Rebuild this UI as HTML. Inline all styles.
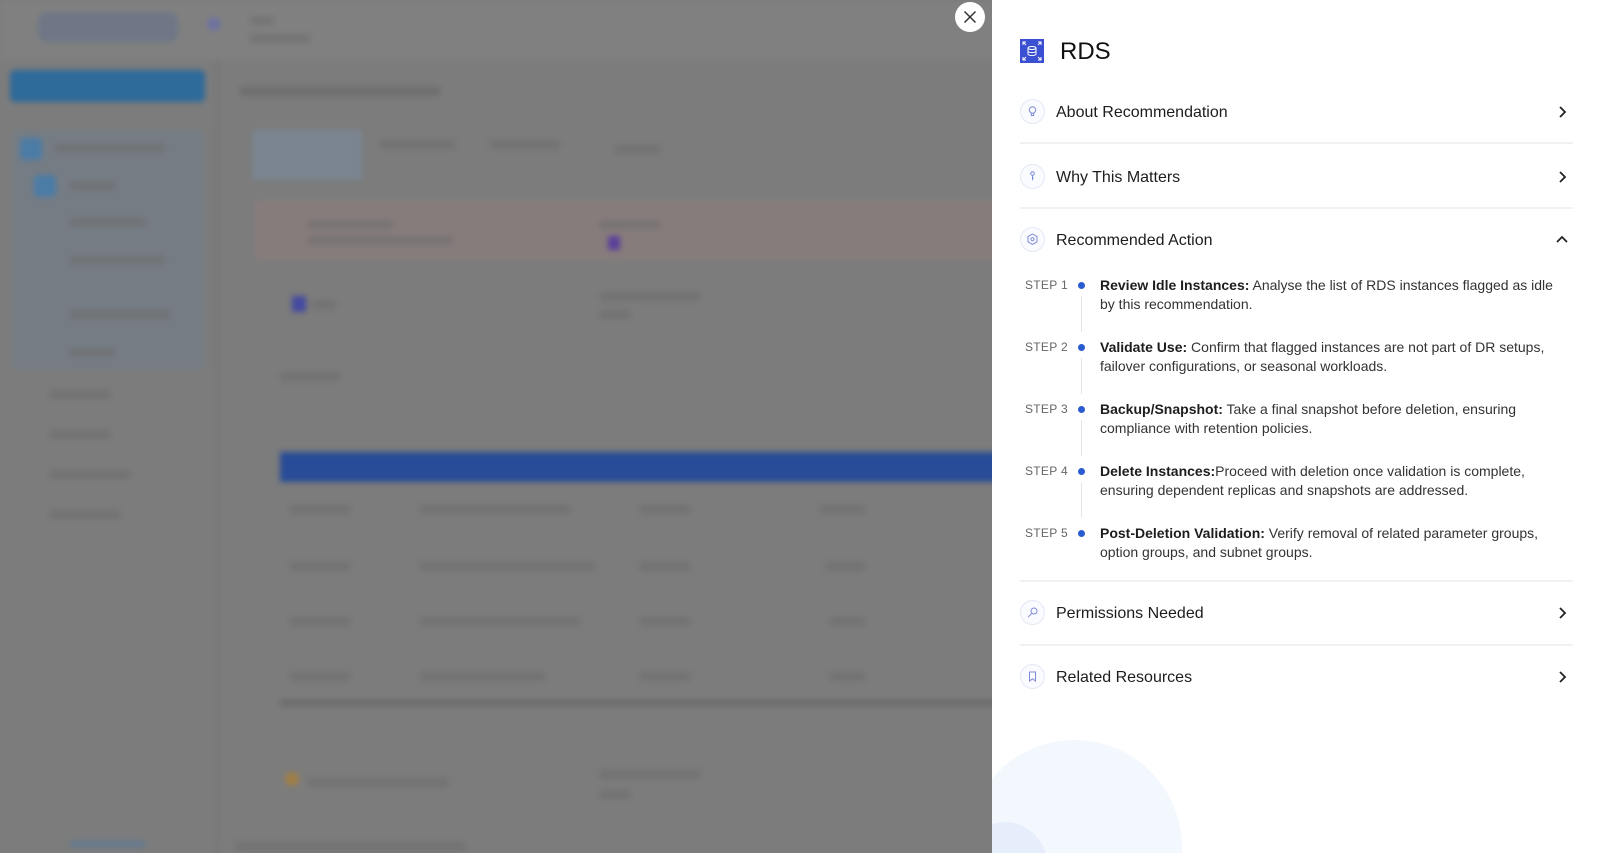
<!DOCTYPE html>
<html><head><meta charset="utf-8"><style>
*{margin:0;padding:0;box-sizing:border-box}
html,body{width:1600px;height:853px;overflow:hidden}
body{position:relative;background:#7c7c7c;font-family:"Liberation Sans",sans-serif}
.bg{position:absolute;left:0;top:0;width:1000px;height:853px;filter:blur(3px);overflow:hidden}
.bg div{position:absolute}
.g{background:#6c6c6c;opacity:.55;height:9px}
.panel{position:absolute;left:992px;top:0;width:608px;height:853px;background:#fff;overflow:hidden}
.circ1{position:absolute;left:-25px;top:740px;width:215px;height:215px;border-radius:50%;background:#f3f7fe}
.circ2{position:absolute;left:-30px;top:822px;width:85px;height:85px;border-radius:50%;background:#e6eefb}
.row{position:absolute;left:28px;width:550px;height:30px}
.row .ic{position:absolute;left:0;top:2px;width:25px;height:25px;border-radius:50%;border:1px solid #e4e8f5;background:#fafbff}
.row .t{position:absolute;left:36px;top:7px;font-size:16px;color:#1d1d1f}
.row .ch{position:absolute;right:0;top:7px}
.div{position:absolute;left:28px;width:553px;height:2px;background:#f0f1f3}
.step{position:absolute;left:33px;width:545px;font-size:14px;line-height:19px;color:#333}
.step .l{position:absolute;left:0;top:0;font-size:12px;color:#666;letter-spacing:.3px}
.step .d{position:absolute;left:53px;top:6px;width:7px;height:7px;border-radius:50%;background:#2a5bd0}
.step .x{margin-left:75px}
.step b{color:#1d1d1f}
.vl{position:absolute;left:89px;width:1px;background:#e6e6e6}
</style></head><body>
<div class="bg">
 <div style="left:0;top:0;width:1000px;height:60px;background:#808080"></div>
 <div style="left:38px;top:12px;width:140px;height:30px;border-radius:8px;background:#6f7786"></div>
 <div style="left:208px;top:18px;width:12px;height:12px;background:#6d72a0"></div>
 <div class="g" style="left:250px;top:16px;width:24px"></div>
 <div class="g" style="left:250px;top:34px;width:60px"></div>
 <div style="left:10px;top:70px;width:195px;height:32px;border-radius:5px;background:#2e6a9a"></div>
 <div style="left:12px;top:130px;width:192px;height:240px;border-radius:6px;background:#757c84"></div>
 <div style="left:20px;top:138px;width:22px;height:22px;border-radius:4px;background:#4b7ca6"></div>
 <div style="left:34px;top:175px;width:22px;height:22px;border-radius:4px;background:#4b7ca6"></div>
 <div class="g" style="left:55px;top:144px;width:110px"></div>
 <div class="g" style="left:70px;top:181px;width:45px"></div>
 <div class="g" style="left:70px;top:218px;width:75px"></div>
 <div class="g" style="left:70px;top:256px;width:95px"></div>
 <div class="g" style="left:70px;top:310px;width:100px"></div>
 <div class="g" style="left:70px;top:348px;width:45px"></div>
 <div class="g" style="left:50px;top:390px;width:60px"></div>
 <div class="g" style="left:50px;top:430px;width:60px"></div>
 <div class="g" style="left:50px;top:470px;width:80px"></div>
 <div class="g" style="left:50px;top:510px;width:70px"></div>
 <div class="g" style="left:240px;top:87px;width:200px;opacity:.8"></div>
 <div style="left:252px;top:130px;width:110px;height:50px;background:#7b8591"></div>
 <div class="g" style="left:380px;top:140px;width:75px"></div>
 <div class="g" style="left:490px;top:140px;width:70px"></div>
 <div class="g" style="left:615px;top:145px;width:45px"></div>
 <div style="left:255px;top:200px;width:745px;height:60px;background:#877c7c"></div>
 <div class="g" style="left:308px;top:220px;width:85px"></div>
 <div class="g" style="left:308px;top:236px;width:145px"></div>
 <div class="g" style="left:600px;top:220px;width:60px"></div>
 <div style="left:292px;top:296px;width:14px;height:16px;background:#454aa0"></div>
 <div class="g" style="left:312px;top:300px;width:24px"></div>
 <div class="g" style="left:600px;top:292px;width:100px"></div>
 <div class="g" style="left:600px;top:310px;width:30px"></div>
 <div class="g" style="left:280px;top:372px;width:60px"></div>
 <div style="left:608px;top:236px;width:12px;height:14px;background:#5a3f9a"></div>
 <div style="left:280px;top:452px;width:720px;height:30px;background:#284c97"></div>
 <div class="g" style="left:290px;top:505px;width:60px"></div><div class="g" style="left:420px;top:505px;width:150px"></div><div class="g" style="left:640px;top:505px;width:50px"></div><div class="g" style="left:820px;top:505px;width:45px"></div>
 <div class="g" style="left:290px;top:562px;width:60px"></div><div class="g" style="left:420px;top:562px;width:175px"></div><div class="g" style="left:640px;top:562px;width:50px"></div><div class="g" style="left:825px;top:562px;width:40px"></div>
 <div class="g" style="left:290px;top:617px;width:60px"></div><div class="g" style="left:420px;top:617px;width:160px"></div><div class="g" style="left:640px;top:617px;width:50px"></div><div class="g" style="left:830px;top:617px;width:35px"></div>
 <div class="g" style="left:290px;top:672px;width:60px"></div><div class="g" style="left:420px;top:672px;width:125px"></div><div class="g" style="left:640px;top:672px;width:50px"></div><div class="g" style="left:830px;top:672px;width:35px"></div>
 <div style="left:280px;top:700px;width:720px;height:6px;background:#6a6a6a"></div>
 <div style="left:285px;top:772px;width:14px;height:14px;border-radius:50%;background:#a07f44"></div>
 <div class="g" style="left:308px;top:778px;width:140px"></div>
 <div class="g" style="left:600px;top:770px;width:100px"></div>
 <div class="g" style="left:600px;top:790px;width:30px"></div>
 <div class="g" style="left:235px;top:842px;width:230px"></div>
 <div style="left:70px;top:840px;width:75px;height:8px;background:#5a7a9a;opacity:.6"></div>
 <div style="left:215px;top:60px;width:4px;height:793px;background:#777"></div>
</div>
<div style="position:absolute;left:955px;top:2px;width:30px;height:30px;border-radius:50%;background:#fff">
 <svg width="30" height="30" viewBox="0 0 30 30"><path d="M9.5 9.5L20.5 20.5M20.5 9.5L9.5 20.5" stroke="#333" stroke-width="1.5"/></svg>
</div>
<div class="panel">
 <div class="circ1"></div><div class="circ2"></div>
 <div style="position:absolute;left:28px;top:39px;width:24px;height:24px;background:#3a4fd1">
  <svg width="24" height="24" viewBox="0 0 24 24" fill="none" stroke="#fff" stroke-width="1"><ellipse cx="12" cy="9" rx="4" ry="1.5"/><path d="M8 9v6c0 1 1.8 1.5 4 1.5s4-.5 4-1.5V9M8 12c0 1 1.8 1.5 4 1.5s4-.5 4-1.5"/><path d="M3 6V3h3M3 3l3 3M21 6V3h-3M21 3l-3 3M3 18v3h3M3 21l3-3M21 18v3h-3M21 21l-3-3"/></svg>
 </div>
 <div style="position:absolute;left:68px;top:38px;font-size:24px;color:#111">RDS</div>

 <div class="row" style="top:97px"><div class="ic"><svg width="23" height="23" viewBox="0 0 23 23" fill="none" stroke="#7d8ad6" stroke-width="1"><circle cx="11.5" cy="10" r="3.2"/><path d="M10.3 13v2.5h2.4V13"/></svg></div><div class="t">About Recommendation</div><svg class="ch" width="16" height="16" viewBox="0 0 16 16"><path d="M6 3l5 5-5 5" stroke="#222" stroke-width="1.8" fill="none"/></svg></div>
 <div class="div" style="top:142px"></div>
 <div class="row" style="top:162px"><div class="ic"><svg width="23" height="23" viewBox="0 0 23 23" fill="none" stroke="#7d8ad6" stroke-width="1"><circle cx="11.5" cy="8.5" r="1.8"/><path d="M11.5 10.3v5M11.5 13h1.3"/></svg></div><div class="t">Why This Matters</div><svg class="ch" width="16" height="16" viewBox="0 0 16 16"><path d="M6 3l5 5-5 5" stroke="#222" stroke-width="1.8" fill="none"/></svg></div>
 <div class="div" style="top:207px"></div>
 <div class="row" style="top:225px"><div class="ic"><svg width="23" height="23" viewBox="0 0 23 23" fill="none" stroke="#7d8ad6" stroke-width="1"><path d="M11.5 6l4.5 2.6v5.2l-4.5 2.6-4.5-2.6V8.6z"/><circle cx="11.5" cy="11.2" r="1.6"/></svg></div><div class="t">Recommended Action</div><svg class="ch" width="16" height="16" viewBox="0 0 16 16"><path d="M3 10l5-5 5 5" stroke="#222" stroke-width="1.8" fill="none"/></svg></div>

 <div class="vl" style="top:296px;height:36px"></div>
 <div class="vl" style="top:358px;height:36px"></div>
 <div class="vl" style="top:420px;height:36px"></div>
 <div class="vl" style="top:482px;height:36px"></div>
 <div class="step" style="top:276px"><span class="l">STEP 1</span><span class="d"></span><div class="x"><b>Review Idle Instances:</b> Analyse the list of RDS instances flagged as idle by this recommendation.</div></div>
 <div class="step" style="top:338px"><span class="l">STEP 2</span><span class="d"></span><div class="x"><b>Validate Use:</b> Confirm that flagged instances are not part of DR setups, failover configurations, or seasonal workloads.</div></div>
 <div class="step" style="top:400px"><span class="l">STEP 3</span><span class="d"></span><div class="x"><b>Backup/Snapshot:</b> Take a final snapshot before deletion, ensuring compliance with retention policies.</div></div>
 <div class="step" style="top:462px"><span class="l">STEP 4</span><span class="d"></span><div class="x"><b>Delete Instances:</b>Proceed with deletion once validation is complete, ensuring dependent replicas and snapshots are addressed.</div></div>
 <div class="step" style="top:524px"><span class="l">STEP 5</span><span class="d"></span><div class="x"><b>Post-Deletion Validation:</b> Verify removal of related parameter groups, option groups, and subnet groups.</div></div>

 <div class="div" style="top:580px"></div>
 <div class="row" style="top:598px"><div class="ic"><svg width="23" height="23" viewBox="0 0 23 23" fill="none" stroke="#7d8ad6" stroke-width="1"><circle cx="13" cy="10" r="3"/><path d="M11 12.2l-4 4"/></svg></div><div class="t">Permissions Needed</div><svg class="ch" width="16" height="16" viewBox="0 0 16 16"><path d="M6 3l5 5-5 5" stroke="#222" stroke-width="1.8" fill="none"/></svg></div>
 <div class="div" style="top:644px"></div>
 <div class="row" style="top:662px"><div class="ic"><svg width="23" height="23" viewBox="0 0 23 23" fill="none" stroke="#7d8ad6" stroke-width="1"><path d="M8.5 7h6v9l-3-2.2-3 2.2z"/></svg></div><div class="t">Related Resources</div><svg class="ch" width="16" height="16" viewBox="0 0 16 16"><path d="M6 3l5 5-5 5" stroke="#222" stroke-width="1.8" fill="none"/></svg></div>
</div>
</body></html>
